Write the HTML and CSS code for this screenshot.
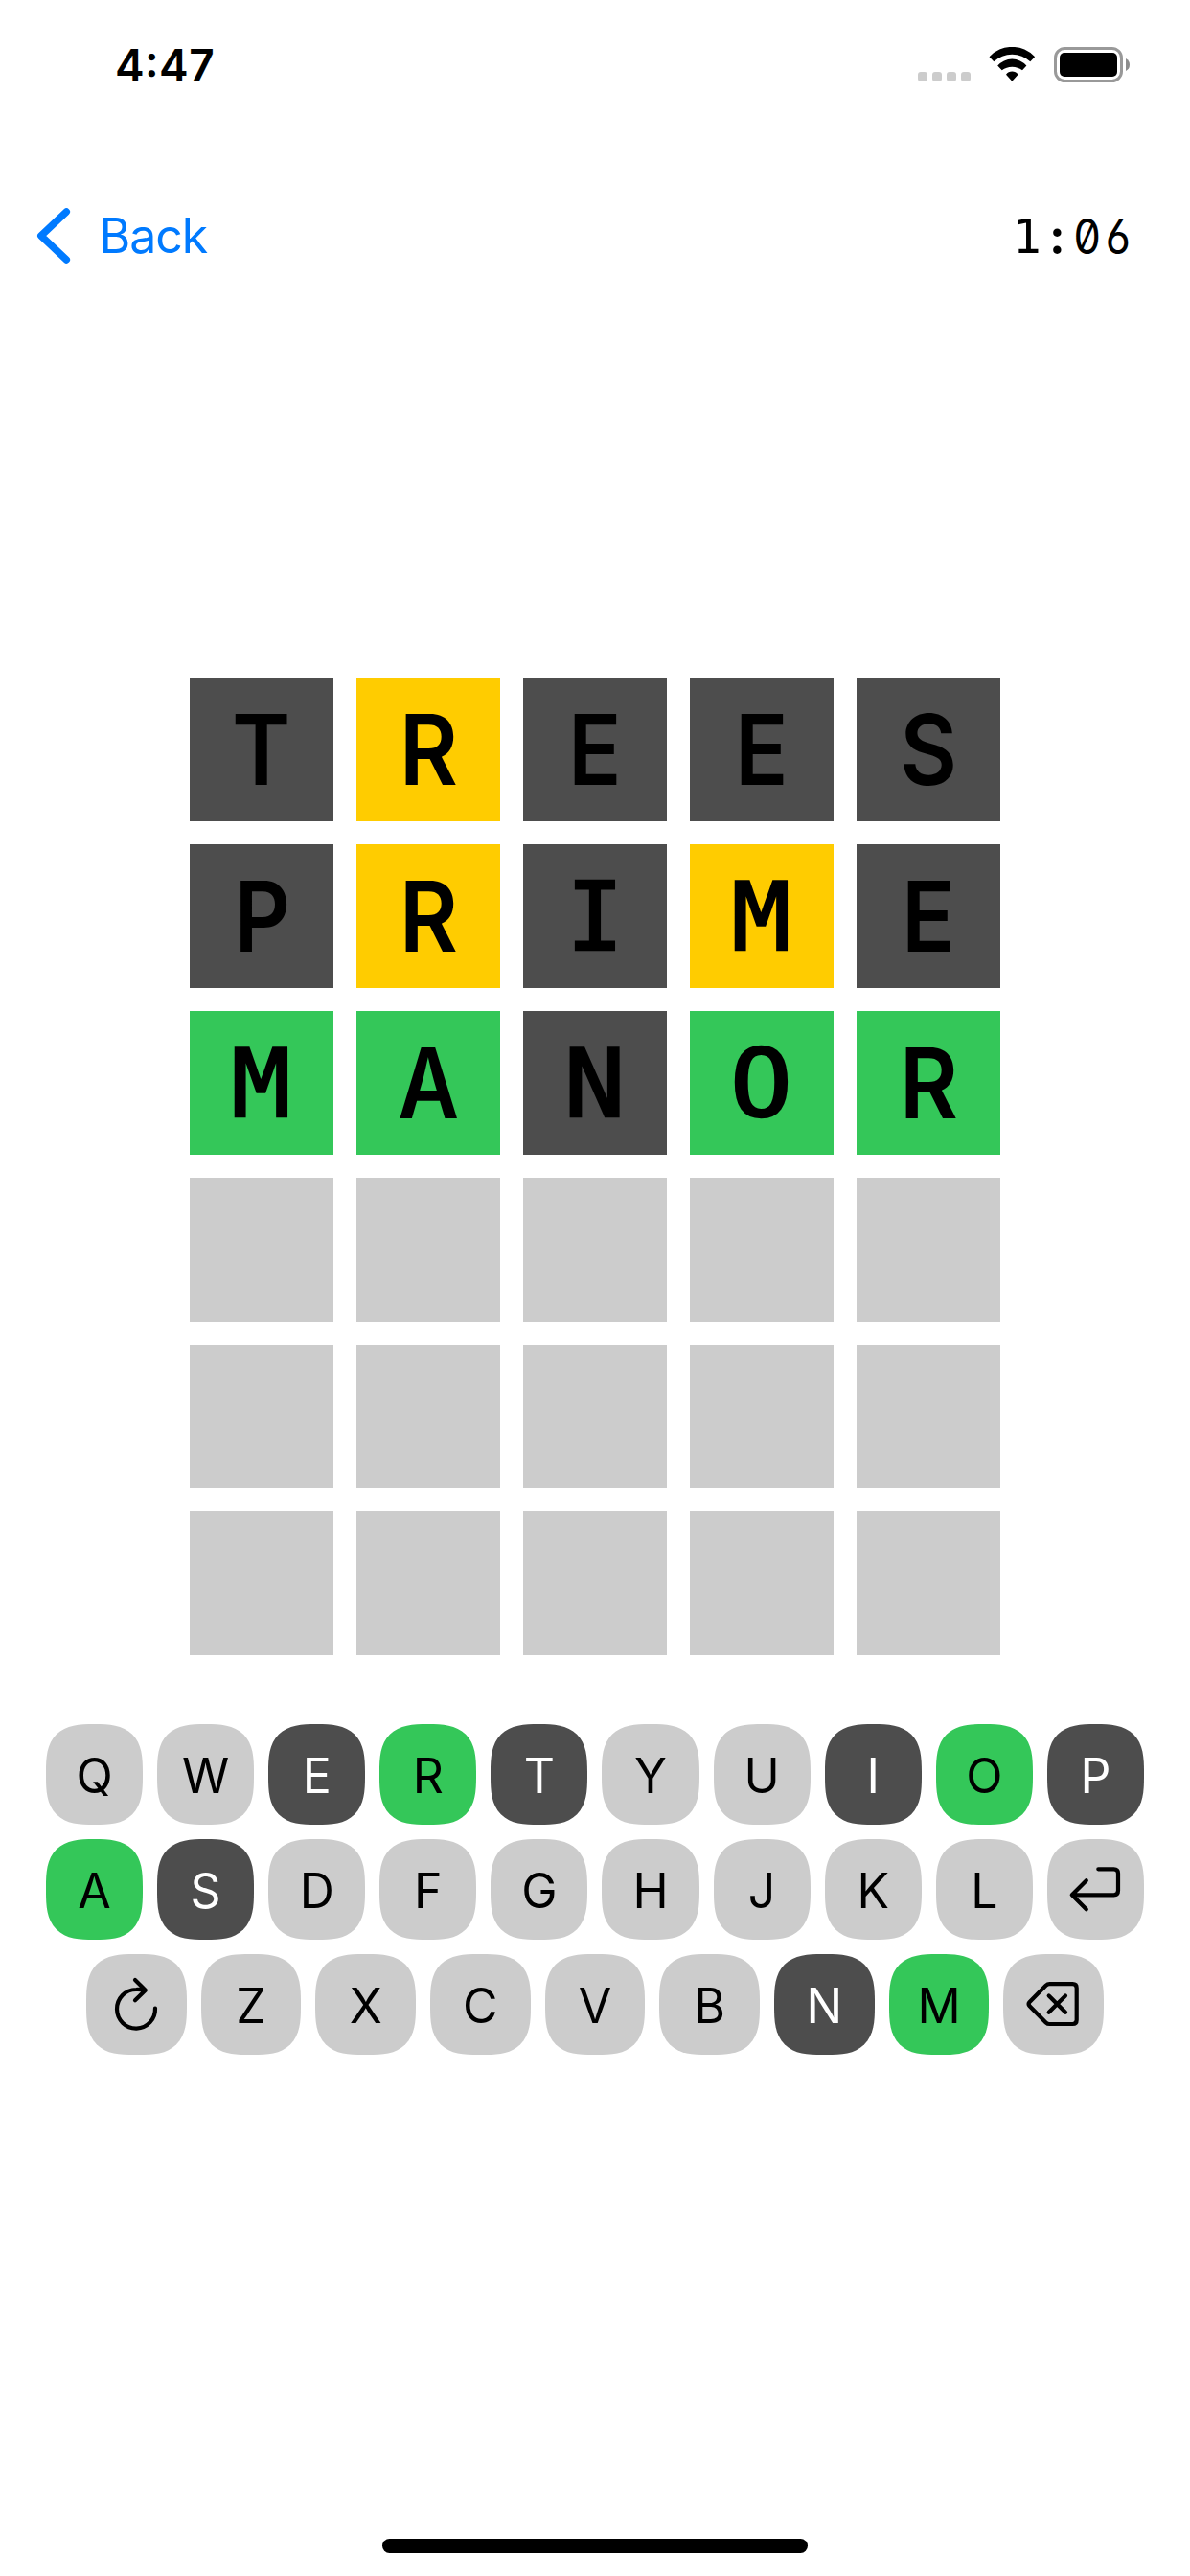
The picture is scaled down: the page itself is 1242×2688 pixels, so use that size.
FILE: index.html
```html
<!DOCTYPE html>
<html lang="en">
<head>
<meta charset="utf-8">
<title>Word Game</title>
<link rel="stylesheet" href="styles.css">
</head>
<body>
<div class="screen">
  <header class="status">
    <span class="clock">4:47</span>
    <div class="indicators">
      <div class="signal"><i></i><i></i><i></i><i></i></div>
      <svg class="wifi" width="49" height="37" viewBox="0 0 49 37"><path d="M.5 10.3A32.4 32.4 0 0 1 48.1 10.3L43.3 15.3A27.6 27.6 0 0 0 5.3 15.3ZM9.2 19.5A20 20 0 0 1 39.4 19.5L35 24.3A17.4 17.4 0 0 0 13.7 24.3ZM18 28.7A7.8 7.8 0 0 1 30.6 28.7L24.3 35.7Z"/></svg>
      <svg class="battery" width="80" height="37" viewBox="0 0 80 37"><rect x="1.5" y="1.5" width="69" height="34" rx="10" fill="none" stroke="#999" stroke-width="3"/><rect x="6" y="6" width="60" height="25" rx="5"/><path d="M75 12q4 2 4 6.500t-4 6.500z" fill="#8c8c8c"/></svg>
    </div>
  </header>

  <nav class="nav">
    <a class="back">
      <svg width="36" height="60" viewBox="0 0 36 60"><path d="M31.300 5L4.800 30L31.300 55"/></svg>
      <span>Back</span>
    </a>
    <div class="timer"><span class="one">1</span><span class="colon">:</span><span class="digit">0</span><span class="digit">6</span></div>
  </nav>

  <main class="board">
    <div class="tile absent"><b class="t">T</b></div><div class="tile present"><b class="r">R</b></div><div class="tile absent"><b class="e">E</b></div><div class="tile absent"><b class="e">E</b></div><div class="tile absent"><b class="s">S</b></div>
    <div class="tile absent"><b class="p">P</b></div><div class="tile present"><b class="r">R</b></div><div class="tile absent"><b class="i">I</b></div><div class="tile present"><b class="m">M</b></div><div class="tile absent"><b class="e">E</b></div>
    <div class="tile correct"><b class="m">M</b></div><div class="tile correct"><b class="a">A</b></div><div class="tile absent"><b class="n">N</b></div><div class="tile correct"><b class="o">O</b></div><div class="tile correct"><b class="r">R</b></div>
    <div class="tile"></div><div class="tile"></div><div class="tile"></div><div class="tile"></div><div class="tile"></div>
    <div class="tile"></div><div class="tile"></div><div class="tile"></div><div class="tile"></div><div class="tile"></div>
    <div class="tile"></div><div class="tile"></div><div class="tile"></div><div class="tile"></div><div class="tile"></div>
  </main>

  <section class="keyboard">
    <div class="row">
      <div class="key">Q</div><div class="key">W</div><div class="key absent">E</div><div class="key correct">R</div><div class="key absent">T</div><div class="key">Y</div><div class="key">U</div><div class="key absent">I</div><div class="key correct">O</div><div class="key absent">P</div>
    </div>
    <div class="row">
      <div class="key correct">A</div><div class="key absent">S</div><div class="key">D</div><div class="key">F</div><div class="key">G</div><div class="key">H</div><div class="key">J</div><div class="key">K</div><div class="key">L</div>
      <div class="key"><svg width="101" height="105" viewBox="0 0 101 105"><path d="M53.300 31.300H69.500Q74 31.300 74 35.800V53.800Q74 58.300 69.500 58.300H26M40.800 43.300L25.800 58.300L40.800 73.200"/></svg></div>
    </div>
    <div class="row short">
      <div class="key"><svg width="105" height="105" viewBox="0 0 105 105"><path d="M72 56.500A20 20.300 0 1 1 52 37Q57 36.800 61.700 37.800M51 27L61.800 37.700L51 48.300"/></svg></div>
      <div class="key">Z</div><div class="key">X</div><div class="key">C</div><div class="key">V</div><div class="key">B</div><div class="key absent">N</div><div class="key correct">M</div>
      <div class="key"><svg width="105" height="105" viewBox="0 0 105 105"><path d="M48.500 31.200H72.500Q76.700 31.200 76.700 35.400V68.800Q76.700 73 72.500 73H48.500Q46.200 73 44.600 71.400L27.600 54.300Q25.600 52.100 27.600 49.900L44.600 32.800Q46.200 31.200 48.500 31.200ZM47.700 43.400L65 60.700M65 43.400L47.700 60.700"/></svg></div>
    </div>
  </section>

  <div class="home"></div>
</div>
</body>
</html>
```
FILE: styles.css
```css
* { box-sizing: border-box; }

body {
  margin: 0;
  background: #fff;
  color: #000;
  font-family: Inter, sans-serif;
}

.screen {
  width: 1242px;
  height: 2688px;
  display: flex;
  flex-direction: column;
  align-items: center;
}

.status {
  width: 100%;
  height: 137px;
  padding: 0 63px 0 120px;
  display: flex;
  justify-content: space-between;
}

.clock {
  margin-top: 38px;
  font-size: 46px;
  line-height: 60px;
  font-weight: 600;
  letter-spacing: 0.4px;
  font-feature-settings: "case";
}

.indicators {
  display: flex;
  margin-top: 49px;
  height: 37px;
}

.signal {
  display: flex;
  gap: 5px;
  padding-top: 26px;
}

.signal i {
  width: 10px;
  height: 10px;
  border-radius: 3px;
  background: #ccc;
}

.wifi { margin: 0 19px; }

.battery { margin-right: -1px; }

.nav {
  width: 100%;
  height: 218px;
  padding: 0 60px 0 38px;
  display: flex;
  align-items: center;
  justify-content: space-between;
}

.back {
  display: flex;
  align-items: center;
  gap: 29.5px;
  color: #007aff;
  font-size: 50px;
  line-height: 60px;
  letter-spacing: -1px;
}

.back path {
  fill: none;
  stroke: #007aff;
  stroke-width: 7.5;
  stroke-linecap: round;
  stroke-linejoin: round;
}

.timer {
  display: flex;
  padding-top: 2px;
  font-size: 50px;
  line-height: 60px;
}

.timer span {
  width: 31.500px;
  text-align: center;
}

.timer .one { font-family: "DejaVu Sans Mono", monospace; }
.timer .colon { font-weight: 700; }

.timer .digit {
  font-feature-settings: "zero", "ss01";
  transform: scaleX(0.9);
}

.board {
  margin-top: 352px;
  display: grid;
  grid-template-columns: repeat(5, 150px);
  grid-auto-rows: 150px;
  gap: 24px;
}

.tile {
  display: flex;
  align-items: center;
  justify-content: center;
  background: #ccc;
  font-size: 102px;
  line-height: 150px;
}

.tile b {
  display: block;
  font-weight: 600;
}

.tile .t { transform: scaleX(0.91); }
.tile .r { transform: scaleX(0.92); }
.tile .p { transform: translateX(1px) scaleX(0.89); }
.tile .e { transform: scaleX(0.9); }
.tile .s { transform: scaleX(0.9); }
.tile .a { transform: scaleX(0.86); }

.tile .i, .tile .m, .tile .n, .tile .o {
  padding-top: 2px;
  font-family: "DejaVu Sans Mono", monospace;
  font-size: 98px;
  font-weight: 400;
  -webkit-text-stroke: 2.5px #000;
}

.tile .m { transform: scaleX(1.04); }
.tile .n { transform: scaleX(1.08); }
.tile .o { transform: scaleX(1.1); }

.tile.absent { background: #4d4d4d; }
.tile.present { background: #fc0; }
.tile.correct { background: #34c759; }

.keyboard {
  margin-top: 72px;
  width: 1146px;
  display: grid;
  gap: 15px;
}

.row {
  display: flex;
  gap: 15px;
  height: 105px;
}

.row.short { padding: 0 42px; }

.key {
  flex: 1 1 0;
  min-width: 0;
  display: flex;
  align-items: center;
  justify-content: center;
  padding-top: 2px;
  border-radius: 38px;
  background: #ccc;
  font-size: 50px;
  line-height: 100px;
}

@supports (corner-shape: superellipse(1.5)) {
  .key {
    border-radius: 50px;
    corner-shape: superellipse(1.5);
  }
}

.key.absent { background: #4d4d4d; color: #fff; }
.key.correct { background: #34c759; }

.key svg {
  flex: none;
  margin-top: -2px;
}

.key path {
  fill: none;
  stroke: #000;
  stroke-width: 4.2;
  stroke-linecap: round;
  stroke-linejoin: round;
}

.home {
  width: 444px;
  height: 15px;
  margin-top: auto;
  margin-bottom: 24px;
  border-radius: 8px;
  background: #000;
}
```
